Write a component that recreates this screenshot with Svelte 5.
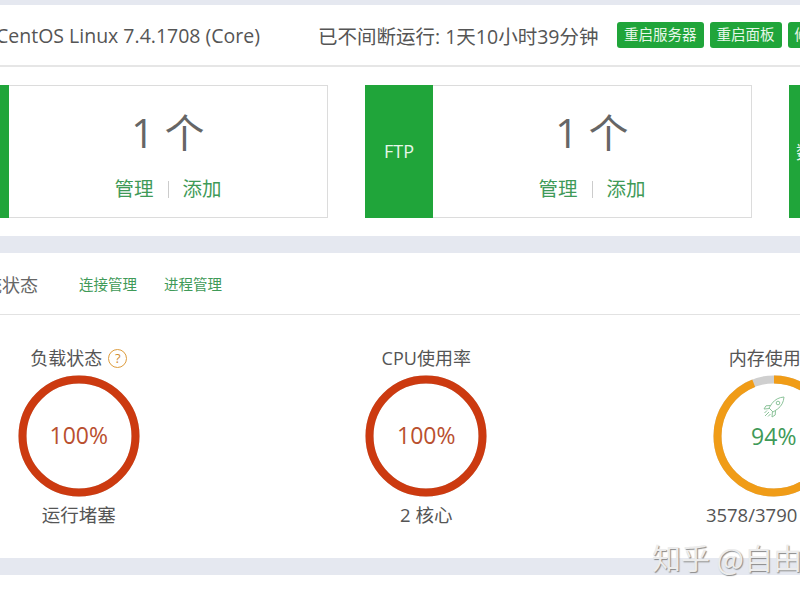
<script>
  const cards = [
    { name: '网站', count: 1 },
    { name: 'FTP', count: 1 },
    { name: '数据库', count: 1 }
  ];

  const gauges = [
    { title: '负载状态', help: true, percent: 100, color: '#cc3a10', text: '#b9502f', foot: '运行堵塞' },
    { title: 'CPU使用率', percent: 100, color: '#cc3a10', text: '#b9502f', foot: '2 核心' },
    { title: '内存使用率', percent: 94, color: '#f09c17', text: '#3f9a58', foot: '3578/3790 (MB)', rocket: true }
  ];

  const radius = 56.5;
  const circumference = 2 * Math.PI * radius;
</script>

<div class="page">
  <section class="panel">
    <header class="sysbar">
      <span class="os">CentOS Linux 7.4.1708 (Core)</span>
      <span class="uptime">已不间断运行: 1天10小时39分钟</span>
      <div class="actions">
        <button>重启服务器</button>
        <button>重启面板</button>
        <button>修复</button>
      </div>
    </header>
    <div class="cards">
      {#each cards as card}
        <div class="card">
          <div class="card-name"><span>{card.name}</span></div>
          <div class="card-body">
            <div class="count">{card.count} 个</div>
            <div class="links"><span>管理</span><i></i><span>添加</span></div>
          </div>
        </div>
      {/each}
    </div>
  </section>

  <section class="panel status">
    <header class="status-head">
      <span class="status-title">系统状态</span>
      <span class="tab">连接管理</span>
      <span class="tab">进程管理</span>
    </header>
    <div class="gauges">
      {#each gauges as g}
        <div class="gauge">
          <div class="gauge-title">
            {g.title}
            {#if g.help}<span class="help">?</span>{/if}
          </div>
          <div class="ring">
            <svg width="122" height="122" viewBox="0 0 122 122">
              <circle cx="61" cy="61" r={radius} fill="none" stroke="#cfcfcf" stroke-width="8" />
              <circle
                cx="61" cy="61" r={radius} fill="none" stroke={g.color} stroke-width="8"
                stroke-dasharray="{circumference * g.percent / 100} {circumference}"
                transform="rotate(-90 61 61)"
              />
            </svg>
            <div class="ring-text" style="color: {g.text}">
              {#if g.rocket}
                <svg class="rocket" width="24" height="24" viewBox="0 0 24 24" fill="none" stroke="#8cc39a" stroke-width="1">
                  <path d="M22 2c-5 .4-9 2.400-12 6.400L7 13l4 4 4.600-3c4-3 6-7 6.400-12z" />
                  <circle cx="16" cy="8" r="1.800" />
                  <path d="M8.500 10.500 4 10.800 2 14l5-.4M13.500 15.500 13.200 20 10 22l.4-5" />
                  <path d="M7 17l-4 4M5 15.500 2.500 18M8.500 19 6 21.500" />
                </svg>
              {/if}
              <span>{g.percent}%</span>
            </div>
          </div>
          <div class="gauge-foot">{g.foot}</div>
        </div>
      {/each}
    </div>
  </section>

  <section class="panel tail"></section>
</div>

<div class="watermark">知乎 @自由的风</div>

<style>
  :global(body) {
    background: #fff;
    overflow: hidden;
  }

  .page {
    width: 1800px;
    margin-left: -95px;
    padding-top: 5px;
    background: #e5e8f0;
    font-family: "Open Sans", "Noto Sans CJK SC", sans-serif;
    color: #555;
    display: flex;
    flex-direction: column;
    gap: 17px;
  }

  .panel {
    background: #fff;
  }

  .sysbar {
    height: 62px;
    box-sizing: border-box;
    border-bottom: 2px solid #e6e6e6;
    display: flex;
    align-items: center;
    padding-left: 91px;
  }
  .os {
    font-size: 19.500px;
    width: 322px;
    white-space: nowrap;
  }
  .uptime {
    font-size: 19.500px;
    width: 299px;
    white-space: nowrap;
  }
  .actions {
    display: flex;
    gap: 6px;
  }
  .actions button {
    height: 26px;
    padding: 0 7px;
    border: 0;
    border-radius: 3px;
    background: #20a53a;
    color: #e6f7e9;
    font-family: inherit;
    font-size: 14.500px;
    line-height: 26px;
  }

  .cards {
    display: flex;
    gap: 37px;
    padding: 18px 0 18px 36px;
  }
  .card {
    width: 387px;
    height: 133px;
    box-sizing: border-box;
    border: 1px solid #dcdcdc;
    display: flex;
  }
  .card-name {
    width: 68px;
    margin: -1px 0 -1px -1px;
    padding-bottom: 2px;
    box-sizing: border-box;
    background: #20a53a;
    color: #e6f7e9;
    font-size: 18px;
    white-space: nowrap;
    display: flex;
    align-items: center;
    justify-content: center;
  }
  .card-body {
    flex: 1;
    text-align: center;
  }
  .count {
    margin-top: 19px;
    font-size: 40px;
    line-height: 56px;
    color: #666;
  }
  .links {
    margin-top: 15px;
    font-size: 19.500px;
    line-height: 26px;
    color: #3f9a58;
    display: flex;
    justify-content: center;
    align-items: center;
    gap: 14px;
  }
  .links i {
    width: 1px;
    height: 17px;
    background: #ccc;
  }

  .status {
    height: 305px;
  }
  .status-head {
    height: 62px;
    box-sizing: border-box;
    border-bottom: 1px solid #e2e2e2;
    display: flex;
    align-items: center;
    padding-left: 61px;
  }
  .status-title {
    font-size: 18px;
    width: 113px;
    color: #666;
    white-space: nowrap;
  }
  .tab {
    font-size: 14.500px;
    color: #3f9a58;
    margin-right: 27px;
  }

  .gauges {
    display: grid;
    grid-template-columns: repeat(3, 347.500px);
    padding-top: 30px;
  }
  .gauge {
    display: flex;
    flex-direction: column;
    align-items: center;
  }
  .gauge-title {
    font-size: 18px;
    line-height: 26px;
    height: 26px;
    white-space: nowrap;
    display: flex;
    align-items: center;
    gap: 6px;
  }
  .help {
    width: 17px;
    height: 17px;
    border: 1.500px solid #dd9c3e;
    border-radius: 50%;
    color: #cf8c30;
    font-size: 13px;
    line-height: 17px;
    text-align: center;
  }
  .ring {
    position: relative;
    width: 122px;
    height: 122px;
    margin-top: 4px;
  }
  .ring svg {
    display: block;
  }
  .ring-text {
    position: absolute;
    inset: -1px 0 1px;
    display: flex;
    flex-direction: column;
    align-items: center;
    justify-content: center;
    font-size: 23px;
    line-height: 30px;
  }
  .ring-text .rocket {
    margin-top: -24px;
    margin-bottom: 2px;
  }
  .gauge-foot {
    margin-top: 5px;
    font-size: 18.500px;
    line-height: 26px;
    white-space: nowrap;
  }

  .tail {
    height: 30px;
  }

  .watermark {
    position: absolute;
    left: 652px;
    top: 537px;
    font-family: "Noto Sans CJK SC", sans-serif;
    font-size: 29px;
    line-height: 40px;
    white-space: nowrap;
    color: #ececec;
    text-shadow: 1px 1px 1px #8a8a8a;
  }
</style>
